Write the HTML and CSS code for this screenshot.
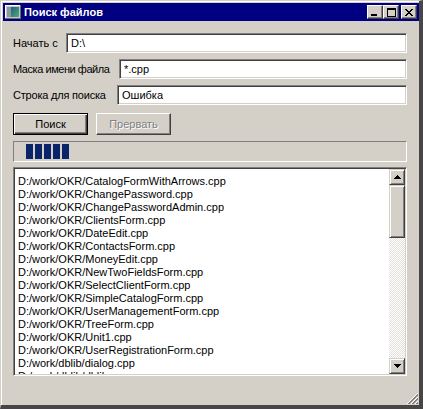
FILE: index.html
```html
<!DOCTYPE html>
<html lang="ru">
<head>
<meta charset="utf-8">
<title>Поиск файлов</title>
<link rel="stylesheet" href="styles.css">
</head>
<body>
<div class="window">
  <div class="titlebar">
    <svg class="app-icon" width="16" height="16" viewBox="0 0 16 16" shape-rendering="crispEdges">
      <defs>
        <linearGradient id="ig" x1="0" y1="0" x2="1" y2="1">
          <stop offset="0" stop-color="#1d5f86"/>
          <stop offset="1" stop-color="#4fae6e"/>
        </linearGradient>
      </defs>
      <rect x="0" y="1" width="16" height="14" fill="#c8c8c8"/>
      <rect x="0" y="1" width="16" height="1" fill="#ffffff"/>
      <rect x="0" y="1" width="1" height="14" fill="#ffffff"/>
      <rect x="15" y="1" width="1" height="14" fill="#6a6a6a"/>
      <rect x="0" y="14" width="16" height="1" fill="#6a6a6a"/>
      <rect x="2" y="3" width="4" height="10" fill="#8a9aa0"/>
      <rect x="6" y="3" width="8" height="10" fill="url(#ig)"/>
    </svg>
    <span class="title">Поиск файлов</span>
    <div class="caption-buttons">
      <span class="cap">
        <svg width="8" height="7" viewBox="0 0 8 7" shape-rendering="crispEdges"><rect x="0" y="5" width="6" height="2" fill="#000"/></svg>
      </span>
      <span class="cap">
        <svg width="9" height="9" viewBox="0 0 9 9" shape-rendering="crispEdges"><rect x="0" y="0" width="9" height="2" fill="#000"/><rect x="0" y="0" width="1" height="9" fill="#000"/><rect x="8" y="0" width="1" height="9" fill="#000"/><rect x="0" y="8" width="9" height="1" fill="#000"/></svg>
      </span>
      <span class="cap cap-close">
        <svg width="8" height="7" viewBox="0 0 8 7" shape-rendering="crispEdges"><path d="M0 0h2v1h1v1h2v-1h1v-1h2v1h-1v1h-1v1h-1v1h1v1h1v1h1v1h-2v-1h-1v-1h-2v1h-1v1h-2v-1h1v-1h1v-1h1v-1h-1v-1h-1v-1h-1z" fill="#000"/></svg>
      </span>
    </div>
  </div>

  <div class="client">
    <div class="row">
      <span class="label label-start">Начать с</span>
      <div class="field">D:\</div>
    </div>
    <div class="row">
      <span class="label label-mask">Маска имени файла</span>
      <div class="field">*.cpp</div>
    </div>
    <div class="row">
      <span class="label label-search">Строка для поиска</span>
      <div class="field">Ошибка</div>
    </div>

    <div class="buttons">
      <span class="btn btn-default">Поиск</span>
      <span class="btn btn-disabled">Прервать</span>
    </div>

    <div class="progress">
      <span class="block"></span><span class="block"></span><span class="block"></span><span class="block"></span><span class="block"></span>
    </div>

    <div class="listbox">
      <div class="items">
        <div>D:/work/OKR/CatalogFormWithArrows.cpp</div>
        <div>D:/work/OKR/ChangePassword.cpp</div>
        <div>D:/work/OKR/ChangePasswordAdmin.cpp</div>
        <div>D:/work/OKR/ClientsForm.cpp</div>
        <div>D:/work/OKR/DateEdit.cpp</div>
        <div>D:/work/OKR/ContactsForm.cpp</div>
        <div>D:/work/OKR/MoneyEdit.cpp</div>
        <div>D:/work/OKR/NewTwoFieldsForm.cpp</div>
        <div>D:/work/OKR/SelectClientForm.cpp</div>
        <div>D:/work/OKR/SimpleCatalogForm.cpp</div>
        <div>D:/work/OKR/UserManagementForm.cpp</div>
        <div>D:/work/OKR/TreeForm.cpp</div>
        <div>D:/work/OKR/Unit1.cpp</div>
        <div>D:/work/OKR/UserRegistrationForm.cpp</div>
        <div>D:/work/dblib/dialog.cpp</div>
        <div>D:/work/dblib/dblib.cpp</div>
      </div>
      <div class="vscroll">
        <span class="sb-btn">
          <svg width="7" height="4" viewBox="0 0 7 4" shape-rendering="crispEdges"><path d="M3 0h1v1h1v1h1v1h1v1h-7v-1h1v-1h1v-1h1z" fill="#000"/></svg>
        </span>
        <span class="sb-thumb"></span>
        <span class="sb-track"></span>
        <span class="sb-btn">
          <svg width="7" height="4" viewBox="0 0 7 4" shape-rendering="crispEdges"><path d="M0 0h7v1h-1v1h-1v1h-1v1h-1v-1h-1v-1h-1v-1h-1z" fill="#000"/></svg>
        </span>
      </div>
    </div>

    <div class="footer">
      <svg class="grip" width="13" height="13" viewBox="0 0 13 13" shape-rendering="crispEdges">
        <path d="M12 1L1 12M12 5L5 12M12 9L9 12" stroke="#ffffff" stroke-width="1" fill="none"/>
        <path d="M12 2L2 12M12 3L3 12M12 6L6 12M12 7L7 12M12 10L10 12M12 11L11 12" stroke="#808080" stroke-width="1" fill="none"/>
      </svg>
    </div>
  </div>
</div>
</body>
</html>
```

FILE: styles.css
```css
* {
  box-sizing: border-box;
  margin: 0;
  padding: 0;
}

html, body {
  background: #d4d0c8;
}

body {
  font-family: "Liberation Sans", Arial, sans-serif;
  font-size: 11px;
  color: #000;
}

.window {
  width: 423px;
  height: 409px;
  display: flex;
  flex-direction: column;
  background: #d4d0c8;
  border-style: solid;
  border-width: 1px 4px 4px 1px;
  border-color: #d4d0c8 #464646 #464646 #d4d0c8;
  padding: 2px 0 0 2px;
  box-shadow: inset 1px 1px 0 #ffffff;
}

.titlebar {
  height: 18px;
  display: flex;
  align-items: center;
  background: #000080;
  padding: 0 2px 0 2px;
}

.app-icon {
  display: block;
  flex: none;
}

.title {
  margin-left: 3px;
  color: #fff;
  font-weight: bold;
  font-size: 11px;
  line-height: 18px;
  flex: 1;
}

.caption-buttons {
  display: flex;
  align-items: center;
}

.cap {
  width: 16px;
  height: 14px;
  display: flex;
  align-items: center;
  justify-content: center;
  background: #d4d0c8;
  border: 1px solid;
  border-color: #ffffff #404040 #404040 #ffffff;
  box-shadow: inset -1px -1px 0 #808080;
}

.cap svg {
  display: block;
}

.cap-close {
  margin-left: 2px;
}

.client {
  flex: 1;
  display: flex;
  flex-direction: column;
  padding: 12px 12px 0 10px;
}

.row {
  display: flex;
  align-items: center;
  height: 20px;
  margin-bottom: 6px;
}

.label {
  flex: none;
  white-space: nowrap;
}

.label-start { width: 53px; }
.label-mask { width: 106px; letter-spacing: -0.45px; }
.label-search { width: 104px; letter-spacing: -0.2px; }

.field {
  flex: 1;
  height: 20px;
  background: #fff;
  border: 1px solid;
  border-color: #808080 #ffffff #ffffff #808080;
  box-shadow: inset 1px 1px 0 #404040, inset -1px -1px 0 #d4d0c8;
  padding: 0 4px;
  line-height: 18px;
  white-space: nowrap;
}

.buttons {
  display: flex;
  gap: 8px;
  margin-top: 2px;
}

.btn {
  width: 75px;
  height: 22px;
  display: flex;
  align-items: center;
  justify-content: center;
  background: #d4d0c8;
}

.btn-default {
  border: 1px solid #000;
  box-shadow: inset 1px 1px 0 #ffffff, inset -1px -1px 0 #404040, inset -2px -2px 0 #808080;
}

.btn-disabled {
  border: 1px solid;
  border-color: #ffffff #404040 #404040 #ffffff;
  box-shadow: inset -1px -1px 0 #808080;
  color: #808080;
  text-shadow: 1px 1px 0 #ffffff;
}

.progress {
  margin-top: 6px;
  height: 21px;
  display: flex;
  align-items: center;
  gap: 2px;
  padding-left: 12px;
  border: 1px solid;
  border-color: #808080 #ffffff #ffffff #808080;
}

.block {
  width: 7px;
  height: 15px;
  background: #0a246a;
}

.listbox {
  margin-top: 5px;
  height: 209px;
  display: flex;
  background: #fff;
  border: 1px solid;
  border-color: #808080 #ffffff #ffffff #808080;
  box-shadow: inset 1px 1px 0 #404040, inset -1px -1px 0 #d4d0c8;
  padding: 1px;
}

.items {
  flex: 1;
  overflow: hidden;
  padding: 6px 0 0 3px;
  line-height: 13px;
  white-space: nowrap;
}

.vscroll {
  width: 16px;
  display: flex;
  flex-direction: column;
}

.sb-btn {
  height: 16px;
  display: flex;
  align-items: center;
  justify-content: center;
  background: #d4d0c8;
  border: 1px solid;
  border-color: #d4d0c8 #404040 #404040 #d4d0c8;
  box-shadow: inset 1px 1px 0 #ffffff, inset -1px -1px 0 #808080;
}

.sb-btn svg {
  display: block;
}

.sb-thumb {
  height: 53px;
  background: #d4d0c8;
  border: 1px solid;
  border-color: #d4d0c8 #404040 #404040 #d4d0c8;
  box-shadow: inset 1px 1px 0 #ffffff, inset -1px -1px 0 #808080;
}

.sb-track {
  flex: 1;
  background: repeating-conic-gradient(#ffffff 0 25%, #e4e1dc 0 50%) 0 0 / 2px 2px;
}

.footer {
  flex: 1;
  display: flex;
  justify-content: flex-end;
  align-items: flex-end;
  margin-right: -12px;
}

.grip {
  display: block;
}
```
